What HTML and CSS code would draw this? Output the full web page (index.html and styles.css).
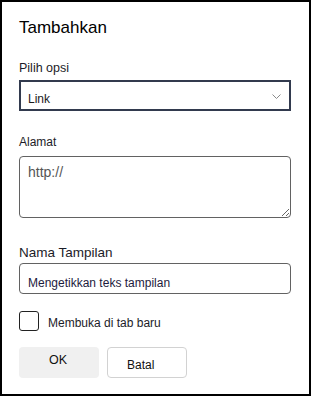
FILE: index.html
```html
<!DOCTYPE html>
<html lang="id">
<head>
    <meta charset="UTF-8">
    <meta name="viewport" content="width=device-width, initial-scale=1.0">
    <title>Tambahkan</title>
    <link rel="stylesheet" href="styles.css">
</head>

<body>
    <div class="dialog">
        <h2 class="judul">Tambahkan</h2>

        <label class="label label-opsi">Pilih opsi</label>
        <div class="pilih">
            <span>Link</span>
            <svg class="chevron" width="9" height="5" viewBox="0 0 9 5">
                <path d="M0.5 0.5 L4.5 4.5 L8.5 0.5" fill="none" stroke="#8a8a8a" stroke-width="1"/>
            </svg>
        </div>

        <label class="label label-alamat" for="alamat">Alamat</label>
        <textarea id="alamat" class="alamat">http://</textarea>

        <label class="label label-nama" for="nama">Nama Tampilan</label>
        <input type="text" id="nama" class="nama" value="Mengetikkan teks tampilan">

        <div class="cek">
            <span class="kotak"></span>
            <span class="cek-teks">Membuka di tab baru</span>
        </div>

        <div class="tombol">
            <button class="btn btn-ok">OK</button>
            <button class="btn btn-batal">Batal</button>
        </div>
    </div>
</body>

</html>
```

FILE: styles.css
```css
body {
    margin: 0;
    font-family: "Liberation Sans", Arial, sans-serif;
    background-color: white;
}

.dialog {
    width: 311px;
    height: 396px;
    box-sizing: border-box;
    border: 2px solid #000;
    padding: 16px 18px 0 17px;
    display: flex;
    flex-direction: column;
    align-items: flex-start;
}

.judul {
    margin: 0;
    font-size: 17px;
    line-height: 20px;
    font-weight: normal;
    color: #000;
}

.label {
    display: block;
    color: #1c1c28;
}

.label-opsi {
    margin-top: 22px;
    font-size: 12.5px;
    line-height: 16px;
}

.pilih {
    margin-top: 4px;
    width: 272px;
    height: 31px;
    box-sizing: border-box;
    border: 2px solid #323a4e;
    padding: 6px 8px 0 7px;
    display: flex;
    align-items: center;
    justify-content: space-between;
    font-size: 12px;
    color: #1a1a1a;
}

.chevron {
    margin-top: -4px;
}

.label-alamat {
    margin-top: 23px;
    font-size: 12px;
    line-height: 16px;
}

.alamat {
    margin-top: 6px;
    width: 272px;
    height: 62px;
    box-sizing: border-box;
    border: 1px solid #626262;
    border-radius: 4px;
    padding: 7px 8px;
    font-family: "Liberation Sans", Arial, sans-serif;
    font-size: 14px;
    line-height: 17px;
    color: #555;
    outline: none;
}

.label-nama {
    margin-top: 26px;
    font-size: 13.5px;
    line-height: 17px;
}

.nama {
    margin: 2px 0 0;
    width: 272px;
    height: 31px;
    box-sizing: border-box;
    border: 1px solid #626262;
    border-radius: 4px;
    padding: 8px 8px 0;
    font-family: "Liberation Sans", Arial, sans-serif;
    font-size: 12px;
    color: #1d1b3d;
    outline: none;
}

.cek {
    margin-top: 17px;
    display: flex;
    align-items: center;
    gap: 9px;
}

.kotak {
    width: 20px;
    height: 20px;
    box-sizing: border-box;
    border: 1px solid #222;
    border-radius: 3px;
}

.cek-teks {
    padding-top: 3px;
    font-size: 12px;
    color: #1c1c28;
}

.tombol {
    margin-top: 16px;
    display: flex;
    gap: 8px;
}

.btn {
    width: 80px;
    height: 31px;
    box-sizing: border-box;
    border-radius: 4px;
    font-family: "Liberation Sans", Arial, sans-serif;
    font-size: 12.5px;
    color: #111;
    display: flex;
    align-items: center;
}

.btn-ok {
    background-color: #f0f0f0;
    border: none;
    justify-content: center;
    padding: 0 2px 5px 0;
}

.btn-batal {
    background-color: white;
    border: 1px solid #d2d2d2;
    justify-content: flex-start;
    padding: 5px 0 0 19px;
    font-size: 12px;
}
```
